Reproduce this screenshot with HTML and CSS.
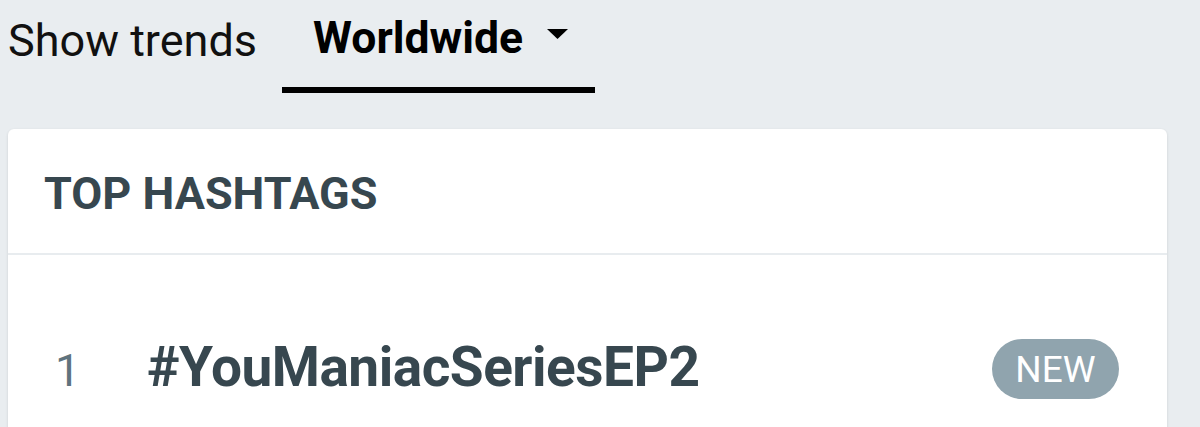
FILE: index.html
```html
<!DOCTYPE html>
<html>
<head>
<meta charset="utf-8">
<link rel="stylesheet" href="styles.css">
</head>
<body>
<div class="bar">
  <span class="label">Show trends</span>
  <div class="tab">
    <span class="tab-text">Worldwide</span>
    <svg class="caret" width="21" height="10" viewBox="0 0 21 10"><path d="M0 0H21L10.5 10Z" fill="#000"/></svg>
  </div>
</div>
<div class="card">
  <div class="card-head">TOP HASHTAGS</div>
  <div class="row">
    <span class="rank">1</span>
    <span class="tag">#YouManiacSeriesEP2</span>
    <span class="badge">NEW</span>
  </div>
</div>
</body>
</html>
```
FILE: styles.css
```css
html, body { margin: 0; padding: 0; }
body {
  background: #e9edf0;
  font-family: Roboto, "Noto Sans", sans-serif;
  width: 1200px;
  height: 427px;
  overflow: hidden;
}
.bar {
  display: flex;
  align-items: flex-start;
  height: 129px;
}
.label {
  margin-left: 8px;
  margin-top: 15px;
  font-size: 45px;
  line-height: 52px;
  color: #111;
}
.tab {
  margin-left: 25px;
  width: 313px;
  height: 93px;
  box-sizing: border-box;
  border-bottom: 6px solid #000;
  display: flex;
  align-items: flex-start;
  padding-left: 31px;
  padding-top: 12px;
}
.tab-text {
  font-weight: 700;
  font-size: 44.5px;
  line-height: 52px;
  color: #000;
}
.caret {
  margin-left: 24px;
  margin-top: 17px;
}
.card {
  margin-left: 8px;
  width: 1159px;
  background: #fff;
  border-radius: 6px;
  box-shadow: 0 1px 3px rgba(0,0,0,0.12);
  height: 320px;
}
.card-head {
  height: 85px;
  padding-top: 39px;
  border-bottom: 2px solid #e8ecef;
  padding-left: 36px;
  font-weight: 700;
  font-size: 45px;
  line-height: 52px;
  color: #37474f;
}
.row {
  display: flex;
  align-items: baseline;
  padding-top: 80px;
  padding-left: 47px;
  padding-right: 48px;
}
.rank {
  width: 92px;
  font-size: 45px;
  line-height: 64px;
  color: #5f737e;
}
.tag {
  flex: 1;
  font-weight: 700;
  font-size: 55px;
  line-height: 64px;
  letter-spacing: -0.5px;
  color: #37474f;
}
.badge {
  align-self: center;
  width: 127px;
  height: 60px;
  border-radius: 30px;
  background: #90a4ae;
  color: #fff;
  font-size: 37px;
  display: flex;
  align-items: center;
  justify-content: center;
}
```
